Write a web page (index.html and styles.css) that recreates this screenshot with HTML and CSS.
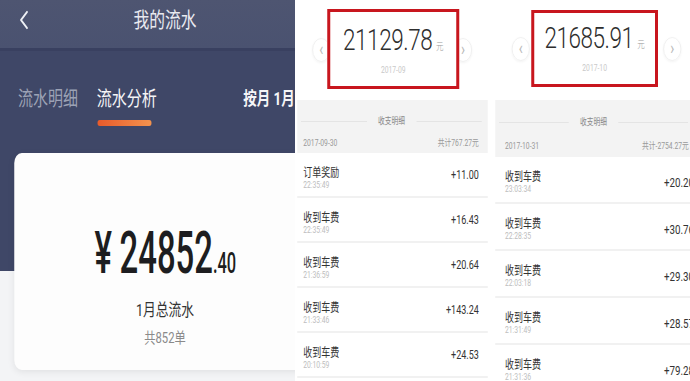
FILE: index.html
```html
<!DOCTYPE html>
<html lang="zh-CN">
  <head>
    <meta charset="UTF-8" />
    <link rel="stylesheet" href="styles.css">
    <title>流水对比</title>
  </head>
  <body>
  <div class="screens">

    <!-- screenshot 1: monthly analysis -->
    <section class="shot shot-analysis">
      <div class="phone">
        <header class="topbar">
          <svg class="back" width="12" height="20" viewBox="0 0 12 20"><polyline points="10,2 2,10 10,18" fill="none" stroke="#eef0f5" stroke-width="2.4" stroke-linecap="round" stroke-linejoin="round"/></svg>
          <h1>我的流水</h1>
          <span></span>
        </header>
        <nav class="tabs">
          <span class="tab">流水明细</span>
          <span class="tab active">流水分析</span>
          <span class="period">按月 1月</span>
        </nav>
        <div class="total-card">
          <div class="total"><span class="yen">¥</span><span class="int">24852</span><span class="dec">.40</span></div>
          <div class="total-label">1月总流水</div>
          <div class="total-count">共852单</div>
        </div>
      </div>
    </section>

    <!-- screenshot 2: September -->
    <section class="shot shot-sep">
      <div class="phone">
        <div class="month">
          <span class="arrow arrow-prev">‹</span>
          <div class="month-box">
            <div class="month-sum">21129.78<small>元</small></div>
            <div class="month-date">2017-09</div>
          </div>
          <span class="arrow arrow-next">›</span>
        </div>
        <div class="ledger-head">
          <div class="ledger-title">收支明细</div>
          <div class="ledger-day"><span>2017-09-30</span><span>共计767.27元</span></div>
        </div>
        <ul class="ledger">
          <li><div class="item"><b>订单奖励</b><i>22:35:49</i></div><span class="amt">+11.00</span></li>
          <li><div class="item"><b>收到车费</b><i>22:35:49</i></div><span class="amt">+16.43</span></li>
          <li><div class="item"><b>收到车费</b><i>21:36:59</i></div><span class="amt">+20.64</span></li>
          <li><div class="item"><b>收到车费</b><i>21:33:46</i></div><span class="amt">+143.24</span></li>
          <li><div class="item"><b>收到车费</b><i>20:10:59</i></div><span class="amt">+24.53</span></li>
        </ul>
      </div>
    </section>

    <!-- screenshot 3: October -->
    <section class="shot shot-oct">
      <div class="phone">
        <div class="month">
          <span class="arrow arrow-prev">‹</span>
          <div class="month-box">
            <div class="month-sum">21685.91<small>元</small></div>
            <div class="month-date">2017-10</div>
          </div>
          <span class="arrow arrow-next">›</span>
        </div>
        <div class="ledger-head">
          <div class="ledger-title">收支明细</div>
          <div class="ledger-day"><span>2017-10-31</span><span>共计-2754.27元</span></div>
        </div>
        <ul class="ledger">
          <li><div class="item"><b>收到车费</b><i>23:03:34</i></div><span class="amt">+20.20</span></li>
          <li><div class="item"><b>收到车费</b><i>22:28:35</i></div><span class="amt">+30.76</span></li>
          <li><div class="item"><b>收到车费</b><i>22:03:18</i></div><span class="amt">+29.30</span></li>
          <li><div class="item"><b>收到车费</b><i>21:31:49</i></div><span class="amt">+28.57</span></li>
          <li><div class="item"><b>收到车费</b><i>21:31:36</i></div><span class="amt">+79.28</span></li>
        </ul>
      </div>
    </section>

  </div>
</body>
</html>
```

FILE: styles.css
```css
* {
  box-sizing: border-box;
}
html, body {
  margin: 0;
  padding: 0;
}
body {
  background: #fff;
  font-family: Roboto, "Noto Sans CJK SC", sans-serif;
  color: #333;
  overflow: hidden;
}

.screens {
  display: flex;
  height: 381px;
}

/* every screenshot is squeezed sideways, so lay out wide and scale */
.shot {
  height: 381px;
  overflow: hidden;
  flex: none;
}
.phone {
  height: 381px;
  transform: scaleX(0.75);
  transform-origin: 0 0;
}

/*===============================*/
/* screenshot 1                  */
/*===============================*/
.shot-analysis {
  width: 295px;
}
.shot-analysis .phone {
  width: 440px;
  background: linear-gradient(to bottom, #3f4767 271px, #f3f4f6 271px);
}
.topbar {
  height: 51px;
  display: grid;
  grid-template-columns: 1fr auto 1fr;
  align-items: center;
  padding-bottom: 8px;
  background: linear-gradient(to bottom, #4e5571, #4a5270);
  border-bottom: 3px solid #394060;
}
.back {
  margin-left: 26px;
}
.topbar h1 {
  margin: 0;
  font-size: 21px;
  line-height: 26px;
  font-weight: normal;
  color: #e9eaf0;
}

.tabs {
  display: flex;
  align-items: flex-start;
  padding: 36px 47px 0 24px;
}
.tab {
  font-size: 20px;
  line-height: 24px;
  color: #9ca2b5;
}
.tab + .tab {
  margin-left: 25px;
}
.tab.active {
  color: #f5f5f7;
}
.tab.active:after {
  content: "";
  display: block;
  width: 72px;
  height: 6px;
  margin: 9px 0 0 1px;
  border-radius: 3px;
  background: linear-gradient(90deg, #e85a2a, #f3934e);
}
.period {
  margin-left: auto;
  font-size: 18px;
  line-height: 24px;
  font-weight: bold;
  color: #f5f5f7;
}

.total-card {
  height: 217px;
  margin: 27px 19px 0;
  padding-top: 70px;
  border-radius: 10px;
  background: #fdfdfd;
  box-shadow: 0 2px 8px rgba(0, 0, 0, 0.08);
  text-align: center;
}
.total {
  display: inline-block;
  transform: scaleX(0.73);
  font-size: 60px;
  line-height: 60px;
  font-weight: 500;
  color: #1d1d20;
  white-space: nowrap;
}
.total .yen {
  margin-right: 14px;
}
.total .dec {
  font-size: 30px;
}
.total-label {
  margin-top: 6px;
  font-size: 17px;
  line-height: 22px;
  color: #333;
}
.total-count {
  margin-top: 7px;
  font-size: 15px;
  line-height: 20px;
  color: #8a8a8a;
}

/*===============================*/
/* screenshots 2 and 3           */
/*===============================*/
.shot-sep {
  width: 198px;
}
.shot-sep .phone {
  width: 264px;
}
.shot-oct {
  width: 197px;
}
.shot-oct .phone {
  width: 271px;
}

.month {
  display: flex;
  align-items: flex-start;
  height: 100px;
  padding: 9px 0 0 23px;
}
.arrow {
  flex: none;
  width: 24px;
  height: 24px;
  margin-top: 29px;
  border: 1px solid #eeeeee;
  border-radius: 50%;
  box-shadow: 0 1px 3px rgba(0, 0, 0, 0.05);
  font-size: 18px;
  line-height: 20px;
  text-align: center;
  color: #b9b9b9;
}
.shot-sep .arrow-prev {
  margin-right: -4px;
}
.shot-sep .arrow-next {
  margin-left: -7px;
}
.month-box {
  position: relative;
  z-index: 1;
  width: 176px;
  padding: 13px 0 10px;
  border: solid #c8161e;
  border-width: 3px 4px;
  text-align: center;
  background: #fff;
}
.month-sum {
  font-size: 30px;
  line-height: 30px;
  font-weight: 300;
  letter-spacing: -0.6px;
  color: #2e2e2e;
  white-space: nowrap;
}
.month-sum small {
  margin-left: 5px;
  font-size: 10px;
  letter-spacing: 0;
  color: #9a9a9a;
}
.month-date {
  margin-top: 2px;
  font-size: 9px;
  line-height: 12px;
  color: #c9c9c9;
}

.shot-oct .month {
  padding: 10px 0 0 25px;
}
.shot-oct .arrow {
  margin-top: 27px;
}
.shot-oct .arrow-prev {
  margin-right: 2px;
}
.shot-oct .arrow-next {
  margin-left: 7px;
}
.shot-oct .month-box {
  width: 169px;
  padding-top: 10px;
}

.ledger-head {
  margin: 0 7px 0 3px;
  padding: 15px 0 4px;
  background: #f3f3f3;
  font-size: 9px;
  line-height: 12px;
  color: #999;
}
.ledger-title {
  display: flex;
  align-items: center;
  gap: 15px;
  padding: 0 8px 0 5px;
  color: #888;
}
.ledger-title:before,
.ledger-title:after {
  content: "";
  flex: 1;
  height: 1px;
  background: #e4e4e4;
}
.ledger-day {
  display: flex;
  justify-content: space-between;
  margin-top: 10px;
  padding: 0 12px 0 8px;
}
.shot-oct .ledger-head {
  margin: 0 3px;
  padding: 16px 0 5px;
}
.shot-oct .ledger-day {
  margin-top: 12px;
  padding: 0 7px 0 13px;
}

.ledger {
  list-style: none;
  margin: 0 7px 0 3px;
  padding: 0;
}
.ledger li {
  display: flex;
  justify-content: space-between;
  height: 45px;
  padding: 0 12px 0 8px;
  border-bottom: 2px solid #f1f1f1;
  background: #fff;
}
.item {
  display: flex;
  flex-direction: column;
  padding-top: 13px;
}
.item b {
  font-size: 12px;
  line-height: 14px;
  font-weight: normal;
  color: #333;
}
.item i {
  font-size: 9px;
  line-height: 11px;
  font-style: normal;
  color: #bdbdbd;
}
.amt {
  align-self: center;
  font-size: 12px;
  color: #333;
}
.shot-oct .ledger {
  margin: 0 3px;
}
.shot-oct .ledger li {
  height: 47px;
  padding: 0 0 0 13px;
}
.shot-oct .amt {
  font-size: 13px;
  padding-top: 6px;
}
```
